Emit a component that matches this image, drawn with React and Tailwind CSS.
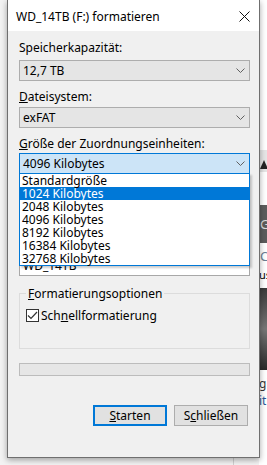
function Chevron() {
  return (
    <svg width="9" height="5" viewBox="0 0 9 5" className="shrink-0">
      <path d="M0.5 0.5 L4.5 4.5 L8.5 0.5" fill="none" stroke="#606060" strokeWidth="1" />
    </svg>
  )
}

function Combo({ value, focused }) {
  return (
    <div
      className={`flex h-[21px] w-[231px] items-center justify-between border pl-[3px] pr-[4px] ${
        focused ? 'border-[#0078d7] bg-[#cce4f7]' : 'border-[#adadad] bg-[#e5e5e5]'
      }`}
    >
      <span>{value}</span>
      <Chevron />
    </div>
  )
}

const sizes = [
  'Standardgröße',
  '1024 Kilobytes',
  '2048 Kilobytes',
  '4096 Kilobytes',
  '8192 Kilobytes',
  '16384 Kilobytes',
  '32768 Kilobytes',
]

export default function App() {
  return (
    <div className="relative h-[465px] w-[267px] overflow-hidden bg-[#f3f3f3] font-['Segoe_UI','Noto_Sans',sans-serif] text-[12px] leading-[15px] text-black">
      {/* window behind the dialog, right edge */}
      <div className="absolute left-[259px] top-0 h-[465px] w-[8px] bg-white">
        <div className="absolute left-0 top-[150px] h-[22px] w-[8px] bg-[#e6e6e6]">
          <svg width="8" height="10" viewBox="0 0 8 10" className="absolute left-[1px] top-[10px]">
            <path d="M4 0 L8 9 L0 9 Z" fill="#222" />
          </svg>
        </div>
        <div className="absolute left-0 top-[205px] h-[38px] w-[8px] bg-[#5c5c5c] pl-[1px] pt-[12px] text-[13px] text-[#ddd]">G</div>
        <div className="absolute left-[1px] top-[249px] text-[13px] text-[#6a7f95]">C</div>
        <div className="absolute left-0 top-[267px] text-[11px]">us</div>
        <div className="absolute left-0 top-[288px] h-[82px] w-[8px] bg-gradient-to-b from-[#3a3a3a] via-[#777] to-[#2a2a2a]" />
        <div className="absolute left-0 top-[376px] text-[12px] text-[#333]">gi</div>
        <div className="absolute left-0 top-[393px] text-[12px] text-[#2b5797]">it</div>
      </div>
      <div className="absolute left-[233px] top-[458px] h-[7px] w-px bg-[#d0d0d0]" />

      {/* dialog */}
      <div className="relative ml-[7px] h-[458px] w-[253px] border-x border-b border-[#6f6f6f] bg-[#f0f0f0] shadow-[0_2px_6px_rgba(0,0,0,0.35)]">
        <div className="flex h-[31px] items-center justify-between bg-white pl-[8px] pr-[9px] pt-[2px]">
          <span>WD_14TB (F:) formatieren</span>
          <svg width="11" height="11" viewBox="0 0 11 11">
            <path d="M0.5 0.5 L10.5 10.5 M10.5 0.5 L0.5 10.5" stroke="#111" strokeWidth="1" />
          </svg>
        </div>

        <div className="relative flex flex-col pl-[11px] pt-[9px]">
          <div>Speicherkapazität:</div>
          <div className="mt-[5px]">
            <Combo value="12,7 TB" />
          </div>

          <div className="mt-[8px]">
            <span className="underline">D</span>ateisystem:
          </div>
          <div className="mt-[3px]">
            <Combo value="exFAT" />
          </div>

          <div className="mt-[8px]">
            <span className="underline">G</span>röße der Zuordnungseinheiten:
          </div>
          <div className="mt-[2px]">
            <Combo value="4096 Kilobytes" focused />
          </div>

          {/* controls hidden under the open list */}
          <div className="mt-[10px] h-[23px] w-[190px] border border-[#adadad] bg-[#e1e1e1]" />
          <div className="mt-[24px] h-[15px]" />
          <div className="mt-[8px] flex h-[22px] w-[231px] items-center border border-[#a8a8a8] bg-white pl-[3px]">
            WD_14TB
          </div>

          {/* group box */}
          <div className="relative mt-[10px] w-[231px] pt-[7px]">
            <div className="border border-[#dcdcdc] pb-6 pl-[6px] pt-[13px]">
              <div className="flex h-[17px] items-center">
                <div className="flex h-[13px] w-[13px] items-center justify-center border border-[#333] bg-white">
                  <svg width="11" height="9" viewBox="0 0 11 9">
                    <path d="M1 4.5 L4 7.5 L10 1" fill="none" stroke="#333" strokeWidth="1.2" />
                  </svg>
                </div>
                <span className="ml-[2px]">
                  Sch<span className="underline">n</span>ellformatierung
                </span>
              </div>
            </div>
            <div className="absolute left-[7px] top-0 bg-[#f0f0f0] px-[2px]">
              <span className="underline">F</span>ormatierungsoptionen
            </div>
          </div>

          <div className="mt-[14px] h-[13px] w-[231px] border border-[#bcbcbc] bg-[#e6e6e6]" />

          <div className="mt-[29px] flex w-[229px] justify-end gap-[7px]">
            <button className="flex h-[21px] w-[74px] items-center justify-center border-2 border-[#0078d7] bg-[#e1e1e1]">
              <span>
                <span className="underline">S</span>tarten
              </span>
            </button>
            <button className="flex h-[21px] w-[74px] items-center justify-center border border-[#adadad] bg-[#e1e1e1]">
              <span>
                S<span className="underline">c</span>hließen
              </span>
            </button>
          </div>

          {/* open dropdown list */}
          <div className="absolute left-[11px] top-[142px] w-[231px] border border-[#0078d7] bg-white shadow-[2px_2px_2px_rgba(0,0,0,0.2)]">
            {sizes.map((s, i) => (
              <div
                key={s}
                className={`h-[13px] pl-[2px] leading-[13px] ${i === 1 ? 'bg-[#0078d7] text-white' : ''}`}
              >
                {s}
              </div>
            ))}
          </div>
        </div>
      </div>
    </div>
  )
}
